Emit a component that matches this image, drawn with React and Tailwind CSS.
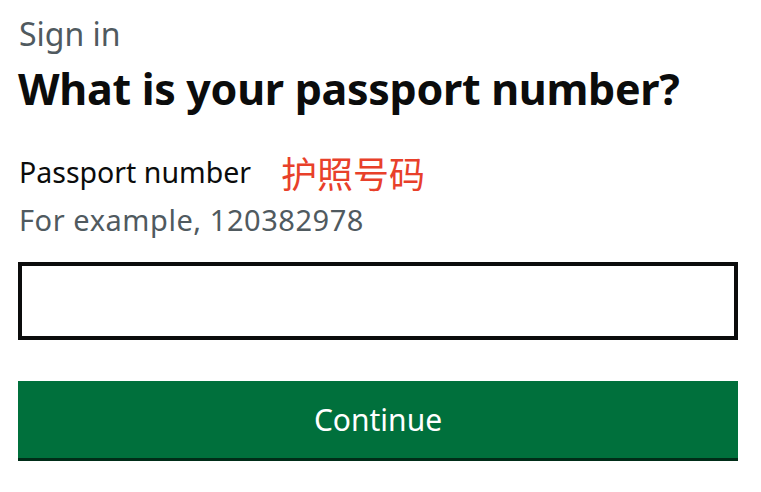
import React from 'react';

export default function App() {
  return (
    <div className="w-[761px] h-[492px] bg-white font-['Noto_Sans','Noto_Sans_CJK_SC',sans-serif] px-[18px] pt-[13px]">
      <p className="text-[32px] leading-[42px] text-[#505a5f] pl-[1px]">Sign in</p>
      <h1 className="mt-[7px] text-[43px] leading-[54px] font-bold text-[#0b0c0c] tracking-[-0.3px]">
        What is your passport number?
      </h1>

      <div className="mt-[37px] flex items-center">
        <label className="text-[28.5px] leading-[38px] text-[#0b0c0c] pl-[1px]">Passport number</label>
        <span className="ml-[30px] text-[36px] leading-[38px] text-[#e8402a] font-['Noto_Sans_CJK_SC',sans-serif]">
          护照号码
        </span>
      </div>
      <p className="mt-[10px] text-[29px] leading-[38px] text-[#505a5f] pl-[1px] tracking-[0.55px]">For example, 120382978</p>

      <input
        type="text"
        className="mt-[23px] block w-[720px] h-[78px] border-[4px] border-[#0b0c0c] bg-white outline-none"
      />

      <button className="mt-[41px] block w-[720px] h-[77px] bg-[#00703c] text-white text-[30px] shadow-[0_3px_0_#002d18]">
        Continue
      </button>
    </div>
  );
}
